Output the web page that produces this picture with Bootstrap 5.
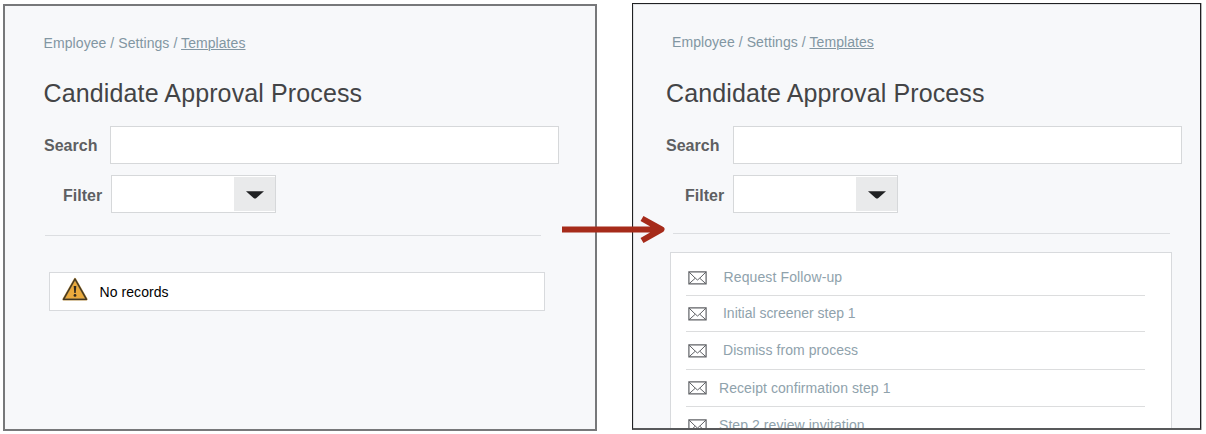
<!DOCTYPE html>
<html lang="en">
<head>
<meta charset="utf-8">
<title>Candidate Approval Process</title>
<link rel="stylesheet" href="https://cdn.jsdelivr.net/npm/bootstrap@5.3.0/dist/css/bootstrap.min.css">
<style>
body{font-family:"Liberation Sans",Arial,sans-serif;font-size:14px;line-height:20px;letter-spacing:.07px;background:#fff;width:1206px;height:434px;overflow:hidden}
.stage{padding:3px 5px 0 3px;gap:35px}
.pane{background:#f7f8fa;overflow:hidden;flex:none}
.pane-before{width:594px;height:427px;margin-top:1px;border:2px solid #77787a;padding:27px 0 0 38px}
.pane-after{width:569px;height:427px;border:1px solid #202123;border-bottom:2px solid #58595b;padding:28px 0 0 33px;box-shadow:inset 1px 1px #dfe1e3,1px 0 #b4b5b7}
.crumbs{color:#8296a2;height:20px}
.crumbs a{color:inherit;text-underline-offset:1px;text-decoration-thickness:1px}
.pane-before .crumbs,.pane-before h1{padding-left:.6px}
.pane-after .crumbs{margin-left:6px}
.pane h1{font-size:25px;line-height:30px;font-weight:400;letter-spacing:.12px;color:#434446;margin:25px 0 17px}
.pane-after h1{margin-top:26px}
.field-row{height:39px}
.field-row label{font-size:16px;line-height:20px;font-weight:700;letter-spacing:.02px;color:#5e5f62}
.search-label{width:67px;padding-top:3px}
.pane-before .search-label{padding-left:1px}
.filter-label{width:68px;padding-left:20px;padding-top:4px}
.pane .form-control,.picker{border:1px solid #d6d8da;border-radius:0;background:#fff;height:38px}
.pane .form-control{width:449px;flex:none}
.picker{width:165px;padding:1px 0}
.pane-after .filter-label{width:67px;padding-left:19px}
.picker button{width:41px;background:#e9eaeb;border:0;padding:0 0 0 1px;line-height:0}
.picker svg{position:relative;top:1px}
.rule{height:1px;background:#dcdee1;width:496px}
.pane-before .rule{margin:24px 0 36px 2px}
.pane-after .rule{margin:22px 0 18px 7px;width:497px}
.notice{width:496px;height:39px;margin-left:6px;border:1px solid #d8dadd;background:#fff;color:#000;padding-left:12px}
.tmpl-list{width:502px;height:220px;margin-left:4px;border:1px solid #d8dadd;background:#fff;padding:7px 0 0 15px}
.tmpl{width:459px;border-bottom:1px solid #dcddde;padding-left:2px;color:#8fa2ac}
.tmpl svg{flex:none;margin-right:16px}
.t1{height:36px}.t2{height:36px}.t3{height:38px}.t4{height:37px}.t5{height:38px}
.t1{padding-left:1.5px;letter-spacing:.12px}.t1 span{padding-left:1px}
.t2{letter-spacing:-.02px}
.t1 span,.t2 span,.t3 span,.t5 span{position:relative;top:-1px}
.t4 svg,.t5 svg{margin-right:12px}
.arrow{position:absolute;left:560px;top:212px}
</style>
</head>
<body class="position-relative">
<svg width="0" height="0" class="position-absolute"><defs>
<symbol id="mail" viewBox="0 0 19 14"><g fill="none" stroke="#606266" stroke-width="1"><path d="M.9.9H18.1V12.9H.9Z" stroke-width="1.2"/><path d="M1 1L7.3 7.2L9.5 9L11.7 7.2L18 1M1 12.8L7.3 7.2M18 12.8L11.7 7.2"/></g></symbol>
</defs></svg>
<main class="stage d-flex align-items-start">
<section class="pane pane-before">
  <nav class="crumbs">Employee / Settings / <a href="#">Templates</a></nav>
  <h1>Candidate Approval Process</h1>
  <div class="field-row d-flex align-items-center"><label class="search-label" for="s1">Search</label><input id="s1" class="form-control"></div>
  <div class="field-row d-flex align-items-center mt-2 pt-1"><label class="filter-label">Filter</label><div class="picker d-flex justify-content-end"><button aria-label="Open"><svg width="18" height="8"><path d="M0 .2H18L10.4 6.9Q9 7.9 7.6 6.9Z" fill="#202123"/></svg></button></div></div>
  <div class="rule"></div>
  <div class="notice d-flex align-items-center">
    <svg width="26" height="24" viewBox="0 0 26 24" style="margin-top:-6px"><path d="M13 2L24.5 22.4H1.5Z" fill="#eaaa3d" stroke="#b08a45" stroke-width="2.2" stroke-linejoin="round"/><path d="M13 2L24.5 22.4H1.5Z" fill="none" stroke="#423620" stroke-width="1.3" stroke-linejoin="round"/><path d="M11.7 9H14.3L13.7 16H12.3Z" fill="#30291e"/><circle cx="13" cy="18.4" r="1.4" fill="#30291e"/></svg>
    <span style="margin-left:11.5px">No records</span>
  </div>
</section>
<section class="pane pane-after">
  <nav class="crumbs">Employee / Settings / <a href="#">Templates</a></nav>
  <h1>Candidate Approval Process</h1>
  <div class="field-row d-flex align-items-center"><label class="search-label" for="s2">Search</label><input id="s2" class="form-control"></div>
  <div class="field-row d-flex align-items-center mt-2 pt-1"><label class="filter-label">Filter</label><div class="picker d-flex justify-content-end"><button aria-label="Open"><svg width="18" height="8"><path d="M0 .2H18L10.4 6.9Q9 7.9 7.6 6.9Z" fill="#202123"/></svg></button></div></div>
  <div class="rule"></div>
  <div class="tmpl-list">
    <div class="tmpl t1 d-flex align-items-center"><svg width="19" height="14"><use href="#mail"/></svg><span>Request Follow-up</span></div>
    <div class="tmpl t2 d-flex align-items-center"><svg width="19" height="14"><use href="#mail"/></svg><span>Initial screener step 1</span></div>
    <div class="tmpl t3 d-flex align-items-center"><svg width="19" height="14"><use href="#mail"/></svg><span>Dismiss from process</span></div>
    <div class="tmpl t4 d-flex align-items-center"><svg width="19" height="14"><use href="#mail"/></svg><span>Receipt confirmation step 1</span></div>
    <div class="tmpl t5 d-flex align-items-center"><svg width="19" height="14"><use href="#mail"/></svg><span>Step 2 review invitation</span></div>
  </div>
</section>
</main>
<svg class="arrow" width="108" height="34" viewBox="0 0 108 34"><path d="M2 17.4H98M82 6.5L101.5 17.4L82 28.5" fill="none" stroke="#a62b1a" stroke-width="6" stroke-linejoin="round"/></svg>
<script src="https://cdn.jsdelivr.net/npm/bootstrap@5.3.0/dist/js/bootstrap.bundle.min.js"></script>
</body>
</html>
